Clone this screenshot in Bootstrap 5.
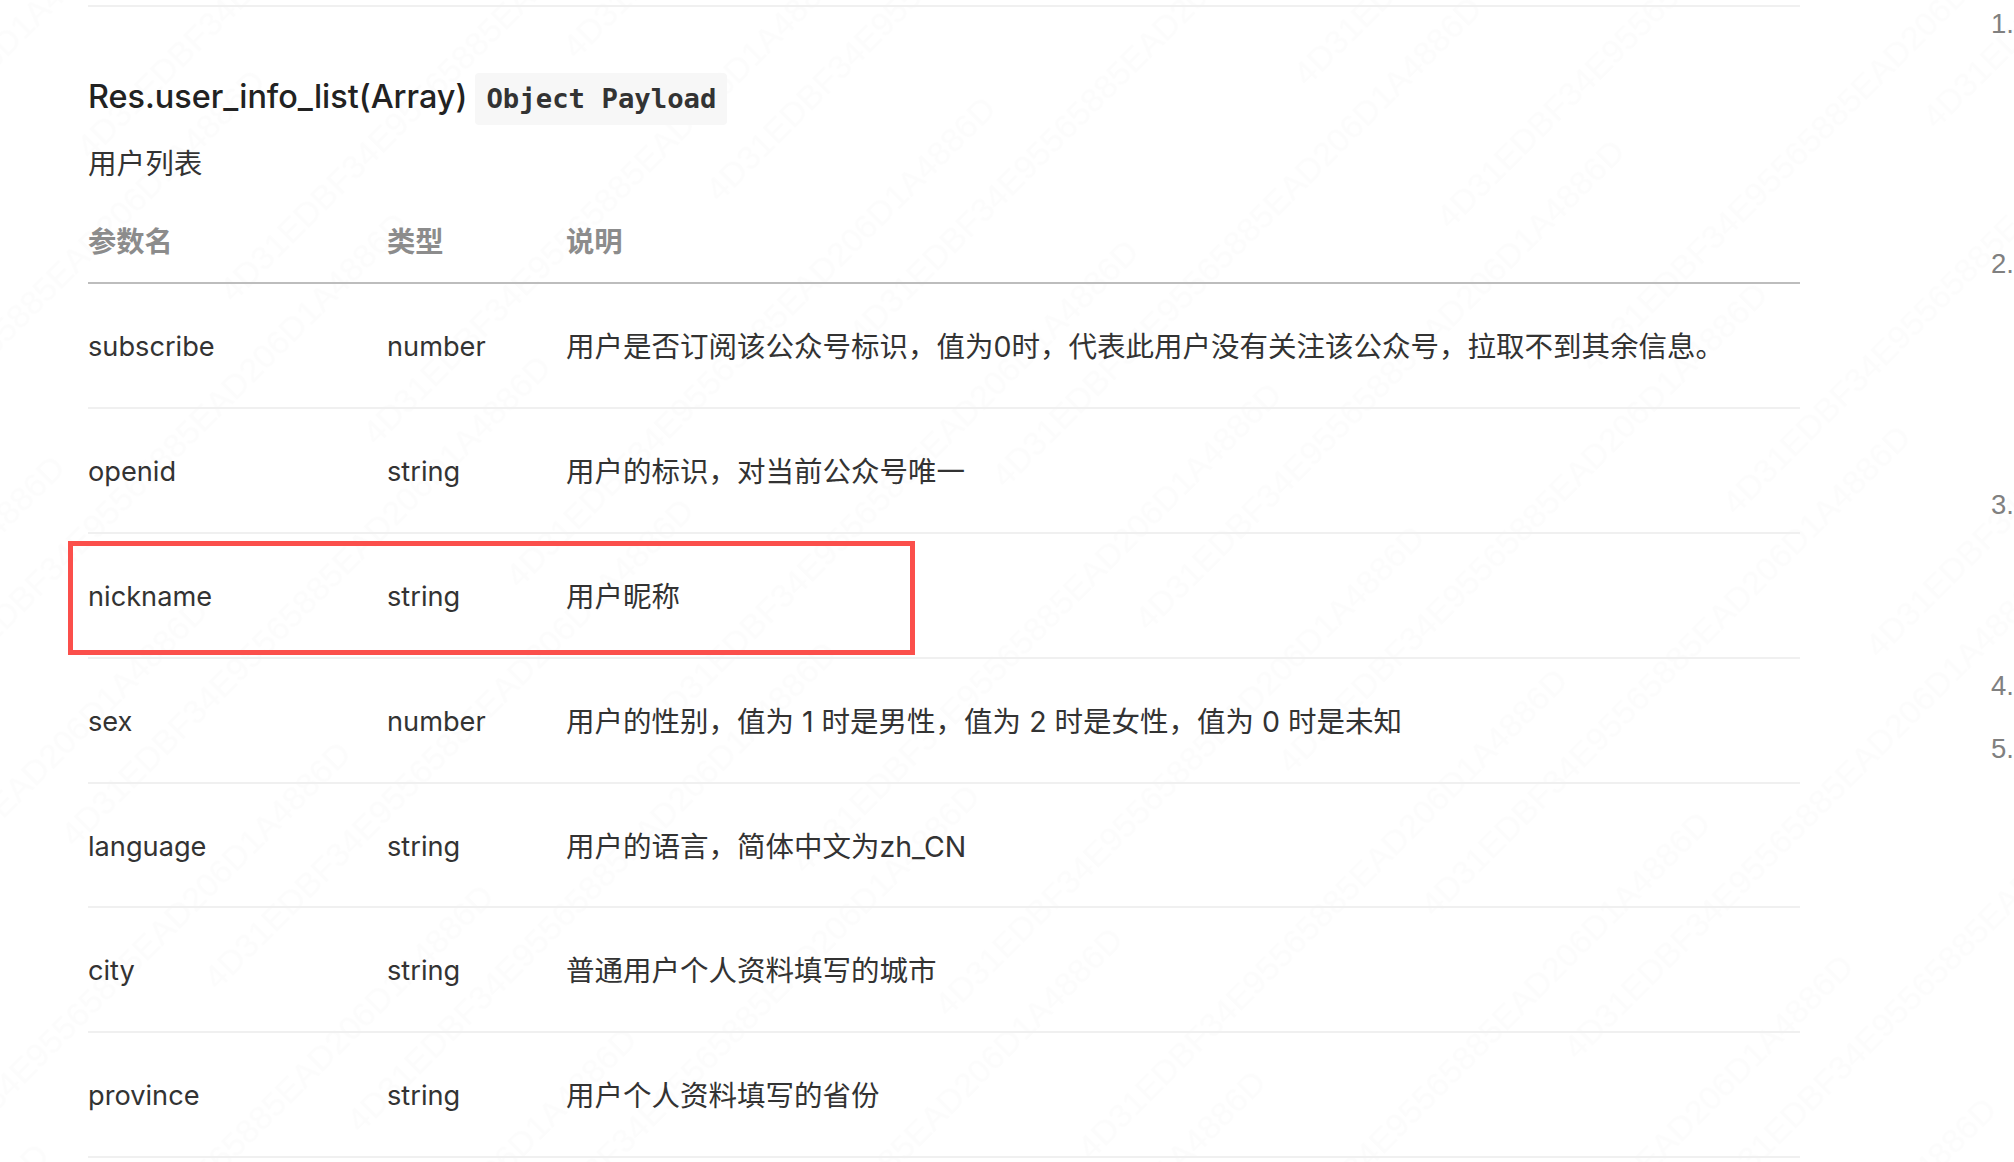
<!DOCTYPE html>
<html lang="zh"><head><meta charset="utf-8">
<link href="https://cdn.jsdelivr.net/npm/bootstrap@5.3.0/dist/css/bootstrap.min.css" rel="stylesheet">
<style>
html,body{height:100%;overflow:hidden;background:#fff}
body{font-family:Inter,"Noto Sans CJK SC",sans-serif;color:#333;font-size:27.2px}
.doc-page{position:relative;height:1162px;overflow:hidden}
.doc-main{position:relative;width:1712px;margin-left:88px;padding-top:5px}
.top-rule{border-top:2px solid #f0f0f0}
.doc-title{font-size:32.4px;font-weight:500;color:#222;margin:0;height:52px;margin-top:66px;gap:8px}
.title-text{padding-bottom:3px}
.doc-code{font-family:"DejaVu Sans Mono",monospace;font-weight:700;font-size:27.3px;background:#f7f7f7;border-radius:4px;padding:0 11px;color:#333;height:52px;line-height:52px}
.doc-sub{font-size:28.6px;margin:0;margin-top:19px;line-height:40px;color:#333}
.doc-table{table-layout:fixed;width:1712px;margin:0;margin-top:15px}
.doc-table th,.doc-table td{padding:0;background:transparent;vertical-align:middle;box-shadow:none}
.doc-table th{font-size:28.3px;font-weight:700;color:#8c8c8c;height:84px;line-height:40px;padding-top:3px;border-bottom:2px solid #bdbdbd}
.doc-table td{height:124.9px;border-bottom:2px solid #f0f0f0;color:#333;line-height:40px;padding-top:3px}
.doc-table td.cell-desc{font-size:28.5px;padding-top:3px}
.col-a{width:299px}.col-b{width:179px}
.red-box{position:absolute;left:68px;top:541px;width:847px;height:114px;border:5px solid #fb4f4b}
.toc-nums{position:absolute;left:1991px;top:0;color:#808080;font-family:"Liberation Sans",sans-serif;font-size:27.5px;line-height:40px}
.toc-nums span{position:absolute;left:0}
.wm-layer{position:absolute;left:0;top:0;width:2014px;height:1162px;pointer-events:none}
.wm-text{font-family:"Liberation Sans",sans-serif;font-size:34px;fill:#000;fill-opacity:.013}
</style></head><body>
<div class="doc-page">
<svg class="wm-layer" width="2014" height="1162" aria-hidden="true">
<defs><pattern id="wmtile" width="912" height="202.2" patternUnits="userSpaceOnUse" patternTransform="rotate(-45)">
<text class="wm-text" x="862.6" y="177">4D31EDBF34E95565885EAD206D1A4886D</text>
<text class="wm-text" x="-49.4" y="177">4D31EDBF34E95565885EAD206D1A4886D</text>
<text class="wm-text" x="365" y="46">4D31EDBF34E95565885EAD206D1A4886D</text>
<text class="wm-text" x="-547" y="46">4D31EDBF34E95565885EAD206D1A4886D</text>
</pattern></defs>
<rect width="2014" height="1162" fill="url(#wmtile)"/>
</svg>
<div class="doc-main">
<div class="top-rule"></div>
<div class="doc-title d-flex align-items-center"><span class="title-text">Res.user_info_list(Array)</span><code class="doc-code">Object Payload</code></div>
<p class="doc-sub">用户列表</p>
<table class="table doc-table">
<thead><tr><th class="col-a">参数名</th><th class="col-b">类型</th><th>说明</th></tr></thead>
<tbody>
<tr><td>subscribe</td><td>number</td><td class="cell-desc">用户是否订阅该公众号标识，值为0时，代表此用户没有关注该公众号，拉取不到其余信息。</td></tr>
<tr><td>openid</td><td>string</td><td class="cell-desc">用户的标识，对当前公众号唯一</td></tr>
<tr><td>nickname</td><td>string</td><td class="cell-desc">用户昵称</td></tr>
<tr><td>sex</td><td>number</td><td class="cell-desc">用户的性别，值为 1 时是男性，值为 2 时是女性，值为 0 时是未知</td></tr>
<tr><td>language</td><td>string</td><td class="cell-desc">用户的语言，简体中文为zh_CN</td></tr>
<tr><td>city</td><td>string</td><td class="cell-desc">普通用户个人资料填写的城市</td></tr>
<tr><td>province</td><td>string</td><td class="cell-desc">用户个人资料填写的省份</td></tr>
</tbody></table>
</div>
<div class="red-box"></div>
<div class="toc-nums"><span style="top:4px">1.</span><span style="top:244px">2.</span><span style="top:485px">3.</span><span style="top:666px">4.</span><span style="top:729px">5.</span></div>
</div>
<script src="https://cdn.jsdelivr.net/npm/bootstrap@5.3.0/dist/js/bootstrap.bundle.min.js"></script>
</body></html>
